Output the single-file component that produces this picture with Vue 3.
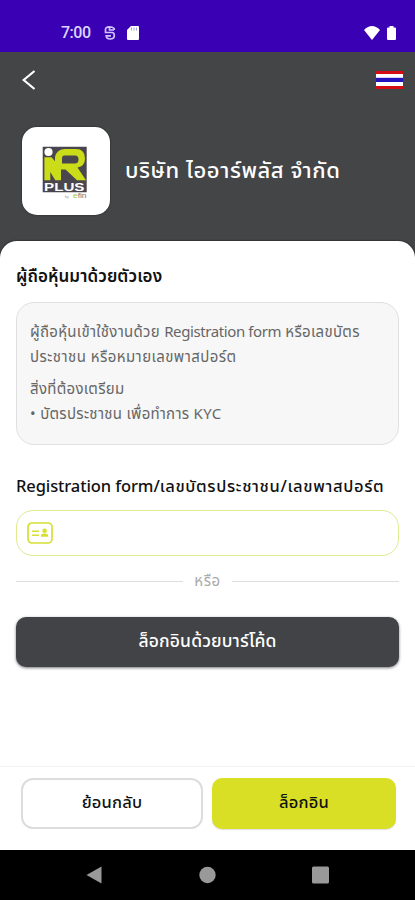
<script setup>
import { ref } from 'vue'

const identity = ref('')
</script>

<template>
  <main class="screen">
    <header class="status">
      <div class="status-left">
        <span class="clock">7:00</span>
        <svg class="swirl" width="12" height="16" viewBox="0 0 12 16" fill="none" stroke="#cfc3fb" stroke-width="1.7">
          <path d="M10.200 5V3.500Q8.500 1.800 5.500 1.800Q1.500 1.800 1.500 4.500V7.500H8Q10.300 7.500 10.300 10.500Q10.300 14 6 14Q2.200 14 2.200 10.800H7M5.500 2v3H10" />
        </svg>
        <svg class="sd" width="12" height="14" viewBox="0 0 12 14">
          <path d="M4 0h7q1 0 1 1v12q0 1-1 1H1q-1 0-1-1V4z" fill="#fff" />
          <path d="M4.500 1.500v3M7 1.500v3M9.500 1.500v3" stroke="#a996e5" stroke-width="1" />
        </svg>
      </div>
      <div class="status-right">
        <svg width="16" height="14" viewBox="0 0 16 14"><path d="M0 4Q8-4 16 4L8 14z" fill="#fff" /></svg>
        <svg width="9" height="14" viewBox="0 0 9 14"><path d="M2.500 0h4v1.400H8q1 0 1 1V13q0 1-1 1H1q-1 0-1-1V2.400q0-1 1-1h1.500z" fill="#fff" /></svg>
      </div>
    </header>

    <section class="hero">
      <nav class="topbar">
        <svg width="14" height="20" viewBox="0 0 14 20" fill="none" stroke="#fff" stroke-width="2.200"><path d="M12.500 1L1.700 10l10.800 9" /></svg>
        <svg class="flag" width="27" height="18" viewBox="0 0 27 18">
          <path fill="#d30b12" d="M0 0h27v18H0z" />
          <path fill="#fff" d="M0 3h27v12H0z" />
          <path fill="#2412bd" d="M0 6.800h27v4.200H0z" />
        </svg>
      </nav>
      <div class="company">
        <div class="logo">
          <svg width="88" height="88" viewBox="0 0 88 88">
            <path fill="#4a464d" d="M20.700 19.700h44v45.500h-44z" />
            <circle cx="26.500" cy="25" r="4.100" fill="#fff" />
            <path fill="#cbdc18" fill-rule="evenodd" d="M22.400 30.200h7.200l3.400 4V30Q35 22 43 22H54Q63 22 63 31.500Q63 39 55.500 40.500L64 53.300H55L43.500 42.500H39V53.300H33.300L28.300 45V53.300H22.400zM42 28.500Q40 28.500 40 31V36.500H53Q56.500 36.500 56.500 32.500T53 28.500z" />
            <text x="22" y="63.700" textLength="40.500" lengthAdjust="spacingAndGlyphs" font-size="11" class="logo-name">PLUS</text>
            <text x="43" y="70.500" font-size="3.500" class="logo-by">by</text>
            <text x="51" y="71" font-size="8" textLength="13.500" lengthAdjust="spacingAndGlyphs" class="logo-efin"><tspan fill="#a7c72d">e</tspan>fin</text>
          </svg>
        </div>
        <h1>บริษัท ไออาร์พลัส จำกัด</h1>
      </div>
    </section>

    <section class="sheet">
      <h2>ผู้ถือหุ้นมาด้วยตัวเอง</h2>
      <div class="info">
        <p class="l1">ผู้ถือหุ้นเข้าใช้งานด้วย <span class="latin">Registration form</span> หรือเลขบัตร</p>
        <p class="l2">ประชาชน หรือหมายเลขพาสปอร์ต</p>
        <p class="l3">สิ่งที่ต้องเตรียม</p>
        <p class="l4">• บัตรประชาชน เพื่อทำการ KYC</p>
      </div>
      <label for="identity"><span class="label-latin">Registration form/</span>เลขบัตรประชาชน/เลขพาสปอร์ต</label>
      <div class="field">
        <svg width="26" height="22" viewBox="0 0 26 22">
          <rect x="1" y="1" width="24" height="20" rx="4" fill="none" stroke="#d6df34" stroke-width="1.700" />
          <path d="M5 9.200h7M5 13.200h7" stroke="#d6df34" stroke-width="1.400" />
          <circle cx="17.600" cy="8.800" r="2.300" fill="#d6df34" />
          <path d="M14 14.800v-1q0-2.200 3.600-2.200t3.600 2.200v1z" fill="#d6df34" />
        </svg>
        <input id="identity" v-model="identity" type="text">
      </div>
      <div class="divider"><span>หรือ</span></div>
      <button class="barcode">ล็อกอินด้วยบาร์โค้ด</button>
    </section>

    <footer class="actions">
      <button class="back">ย้อนกลับ</button>
      <button class="login">ล็อกอิน</button>
    </footer>

    <nav class="system">
      <svg width="16" height="18" viewBox="0 0 16 18"><path d="M15.500 0.500v17L0.500 9z" fill="#999" /></svg>
      <svg width="17" height="18" viewBox="0 0 17 18"><circle cx="8.500" cy="9" r="8.200" fill="#999" /></svg>
      <svg width="17" height="18" viewBox="0 0 17 18"><rect y=".5" width="17" height="17" rx="1.500" fill="#999" /></svg>
    </nav>
  </main>
</template>

<style>
body { margin: 0; }
</style>

<style scoped>
* { box-sizing: border-box; }
.screen { width: 415px; height: 900px; display: flex; flex-direction: column; overflow: hidden; background: #434547; font-family: "Noto Sans", "Noto Sans Thai", sans-serif; color: #111; }
svg { display: block; flex: none; }
h1, h2, p { margin: 0; white-space: nowrap; }
.status { height: 52px; flex: none; background: #3a00b3; display: flex; justify-content: space-between; padding: 13px 19px 0 61px; }
.status-left, .status-right { display: flex; align-items: center; }
.clock { font: 500 16px/20px Roboto, sans-serif; color: #dcd4ff; width: 43px; letter-spacing: -.5px; }
.sd { margin-left: 11px; }
.status-right { gap: 7px; }
.hero { height: 189px; flex: none; }
.topbar { height: 55px; display: flex; justify-content: space-between; align-items: center; padding: 0 12px 0 22px; }
.company { display: flex; align-items: center; padding: 20px 22px 0; gap: 15px; }
.logo { width: 88px; height: 88px; border-radius: 15px; background: #fff; box-shadow: 0 0 2px #222; flex: none; }
.logo-name { font-family: "Liberation Sans", sans-serif; font-weight: 700; fill: #fff; }
.logo-by { font-family: "Liberation Sans", sans-serif; fill: #999; }
.logo-efin { font-family: "Liberation Sans", sans-serif; fill: #697982; }
h1 { font-size: 22px; line-height: 30px; font-weight: 500; letter-spacing: .6px; color: #fff; padding-bottom: 5px; }
.sheet { flex: 1; background: #fff; border-radius: 17px 17px 0 0; padding: 20px 16px 0; box-shadow: 0 0 2px #111; }
h2 { font-size: 17px; line-height: 30px; font-weight: 600; letter-spacing: .08px; }
.info { height: 143px; margin-top: 11px; padding: 16px 13px; border: 1px solid #e0e0e0; border-radius: 18px; background: #f7f7f7; color: #666; font-size: 15px; line-height: 25px; letter-spacing: .3px; }
.latin { letter-spacing: -.4px; }
.l2 { letter-spacing: .44px; }
.l3 { margin-top: 7px; }
label { display: block; width: max-content; margin-top: 26px; font-size: 16.5px; line-height: 30px; font-weight: 500; letter-spacing: .65px; white-space: nowrap; }
.label-latin { letter-spacing: -.1px; }
.field { height: 46px; margin-top: 9px; border: 1.5px solid #dfea91; border-radius: 17px; display: flex; align-items: center; padding: 0 10px; gap: 10px; }
input { flex: 1; min-width: 0; border: 0; outline: 0; background: transparent; font: inherit; }
.divider { height: 30px; margin-top: 10px; display: flex; align-items: center; gap: 11px; font-size: 15px; letter-spacing: .6px; color: #aaa; }
.divider::before, .divider::after { content: ""; height: 1px; flex: 1; background: #ddd; }
button { padding: 0; border: 0; font-family: inherit; white-space: nowrap; display: flex; align-items: center; justify-content: center; }
.barcode { width: 100%; height: 50px; margin-top: 21px; border-radius: 10px; background: #414346; color: #fff; font-size: 17.5px; font-weight: 500; letter-spacing: .15px; padding-bottom: 2px; box-shadow: 0 1px 3px #777; }
.actions { height: 84px; flex: none; background: #fff; border-top: 1px solid #f3f3f3; display: grid; grid-template-columns: 182px 184px; gap: 9px; padding: 11px 19px 0 21px; }
.actions button { height: 51px; border-radius: 10px; font-size: 16.5px; font-weight: 500; letter-spacing: .2px; color: #111; padding-bottom: 3px; }
.actions .back { background: #fff; border: 2px solid #ddd; border-radius: 12px; }
.actions .login { background: #d8df25; box-shadow: 0 1px 1px #ddd; }
.system { height: 50px; flex: none; background: #000; display: flex; justify-content: space-between; align-items: center; padding: 0 86px; }
</style>
